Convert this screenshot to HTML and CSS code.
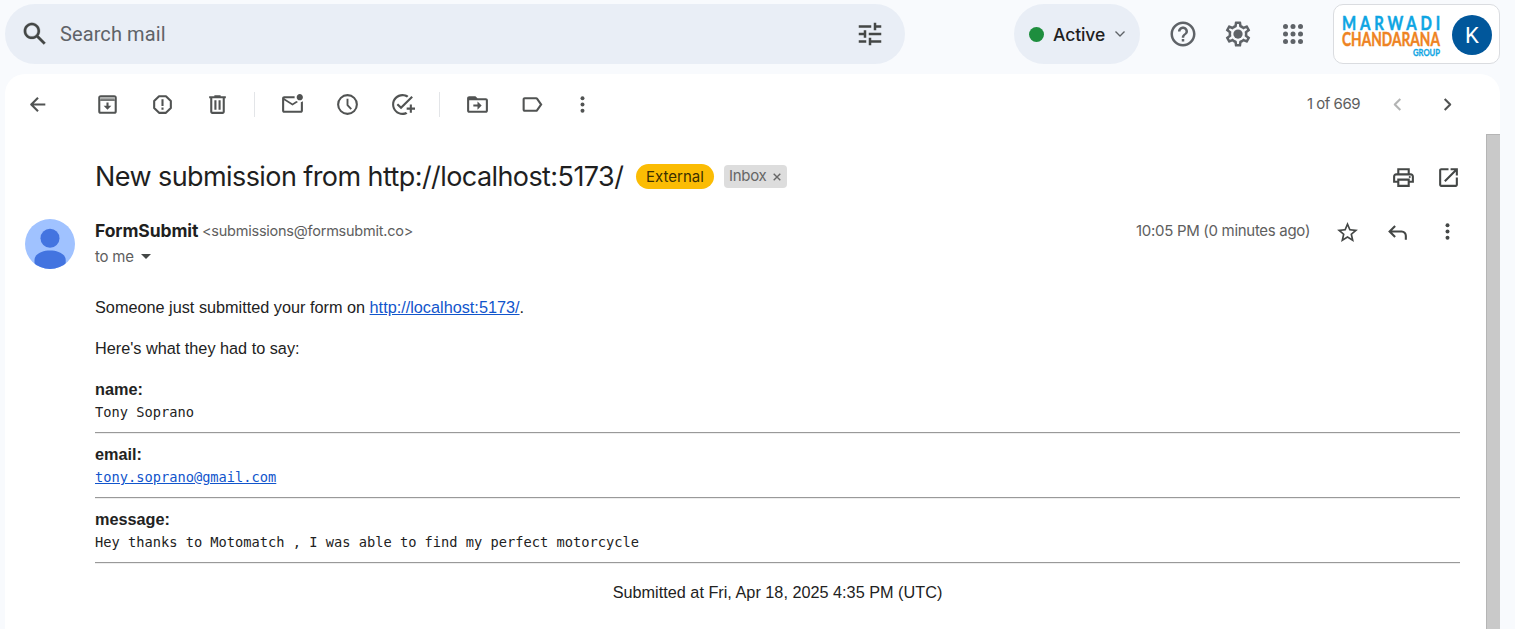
FILE: index.html
```html
<!DOCTYPE html>
<html lang="en">
<head>
<meta charset="utf-8">
<title>New submission from http://localhost:5173/</title>
<link rel="stylesheet" href="styles.css">
</head>
<body>
<header class="header">
  <div class="search">
    <svg class="icon-lg" viewBox="0 0 24 24"><path stroke="#444746" stroke-width=".2" d="M20.490 19l-5.730-5.730C15.530 12.200 16 10.910 16 9.500 16 5.910 13.090 3 9.500 3S3 5.910 3 9.500 5.910 16 9.500 16c1.410 0 2.700-.47 3.770-1.240L19 20.490 20.490 19zM5 9.500C5 7.010 7.010 5 9.500 5S14 7.010 14 9.500 11.990 14 9.500 14 5 11.990 5 9.500z"/></svg>
    <span class="search-text">Search mail</span>
    <svg class="icon-lg" viewBox="0 0 24 24"><path d="M3 17v2h6v-2H3zM3 5v2h10V5H3zm10 16v-2h8v-2h-8v-2h-2v6h2zM7 9v2H3v2h4v2h2V9H7zm14 4v-2H11v2h10zm-6-4h2V7h4V5h-4V3h-2v6z"/></svg>
  </div>
  <div class="status"><span class="status-dot"></span><span class="status-text">Active</span>
    <svg class="status-caret" viewBox="0 0 12 12"><path class="line" d="M1.500 3.500L6 8l4.500-4.500"/></svg>
  </div>
  <nav class="header-icons">
    <svg class="icon-lg" viewBox="0 0 24 24"><path d="M11 18h2v-2h-2v2zm1-16C6.480 2 2 6.480 2 12s4.480 10 10 10 10-4.480 10-10S17.520 2 12 2zm0 18c-4.410 0-8-3.590-8-8s3.590-8 8-8 8 3.590 8 8-3.590 8-8 8zm0-14c-2.210 0-4 1.790-4 4h2c0-1.100.9-2 2-2s2 .9 2 2c0 2-3 1.750-3 5h2c0-2.250 3-2.500 3-5 0-2.210-1.790-4-4-4z"/></svg>
    <svg class="icon-lg" viewBox="0 0 24 24"><path d="M19.430 12.980c.04-.32.07-.64.07-.98 0-.34-.03-.66-.07-.98l2.110-1.650c.19-.15.24-.42.12-.64l-2-3.460c-.09-.16-.26-.25-.44-.25-.06 0-.12.01-.17.03l-2.490 1c-.52-.4-1.080-.73-1.690-.98l-.38-2.650C14.460 2.180 14.250 2 14 2h-4c-.25 0-.46.18-.49.42l-.38 2.650c-.61.25-1.170.59-1.690.98l-2.490-1c-.06-.02-.12-.03-.18-.03-.17 0-.34.09-.43.25l-2 3.460c-.13.22-.07.49.12.64l2.110 1.650c-.04.32-.07.65-.07.98 0 .33.03.66.07.98l-2.110 1.650c-.19.15-.24.42-.12.64l2 3.460c.09.16.26.25.44.25.06 0 .12-.01.17-.03l2.490-1c.52.4 1.080.73 1.690.98l.38 2.650c.03.24.24.42.49.42h4c.25 0 .46-.18.49-.42l.38-2.650c.61-.25 1.170-.59 1.690-.98l2.490 1c.06.02.12.03.18.03.17 0 .34-.09.43-.25l2-3.460c.12-.22.07-.49-.12-.64l-2.110-1.650zm-1.980-1.710c.04.31.05.52.05.73 0 .21-.02.43-.05.73l-.14 1.130.89.7 1.080.84-.7 1.210-1.270-.51-1.040-.42-.9.68c-.43.32-.84.56-1.250.73l-1.060.43-.16 1.130-.2 1.350h-1.400l-.19-1.350-.16-1.130-1.060-.43c-.43-.18-.83-.41-1.230-.71l-.91-.7-1.060.43-1.270.51-.7-1.210 1.080-.84.89-.7-.14-1.130c-.03-.31-.05-.54-.05-.74s.02-.43.05-.73l.14-1.130-.89-.7-1.080-.84.7-1.210 1.270.51 1.040.42.9-.68c.43-.32.84-.56 1.250-.73l1.060-.43.16-1.130.2-1.350h1.390l.19 1.350.16 1.130 1.060.43c.43.18.83.41 1.230.71l.91.7 1.060-.43 1.270-.51.7 1.210-1.070.85-.89.7.14 1.130z"/><circle cx="12" cy="12" r="3.700"/></svg>
    <svg class="icon-lg" viewBox="0 0 24 24"><circle cx="6" cy="6" r="2"/><circle cx="12" cy="6" r="2"/><circle cx="18" cy="6" r="2"/><circle cx="6" cy="12" r="2"/><circle cx="12" cy="12" r="2"/><circle cx="18" cy="12" r="2"/><circle cx="6" cy="18" r="2"/><circle cx="12" cy="18" r="2"/><circle cx="18" cy="18" r="2"/></svg>
  </nav>
  <div class="account">
    <svg class="brand" viewBox="0 0 98 42">
      <text class="brand-blue brand-wide" x="0" y="15.500" font-size="19.500" textLength="102" lengthAdjust="spacingAndGlyphs">MARWADI</text>
      <text class="brand-orange" x="0" y="32" font-size="18" textLength="98" lengthAdjust="spacingAndGlyphs">CHANDARANA</text>
      <text class="brand-blue" x="71" y="41.500" font-size="10" textLength="27" lengthAdjust="spacingAndGlyphs">GROUP</text>
    </svg>
    <span class="account-avatar">K</span>
  </div>
</header>
<main class="panel">
  <div class="toolbar">
    <svg class="icon back" viewBox="0 0 24 24"><path class="line" d="M19.500 12H6.500M12.500 5.500L6 12l6.500 6.500"/></svg>
    <div class="tools">
      <svg class="icon" viewBox="0 0 24 24"><rect class="line" x="4.100" y="4.100" width="15.800" height="15.800" rx="1.500"/><path class="shade" d="M5 5h14v3H5z"/><path d="M5 7.200h14v1.300H5zM11 10h2v3.300h2.700L12 17l-3.700-3.700H11z"/></svg>
      <svg class="icon" viewBox="0 0 24 24"><path class="line" d="M8.700 4h6.600L20 8.700v6.600L15.300 20H8.700L4 15.300V8.700z"/><path d="M11 7h2v6.500h-2zM11 15h2v2h-2z"/></svg>
      <svg class="icon" viewBox="0 0 24 24"><path d="M15 4V3H9v1H4v2h1v13c0 1.100.9 2 2 2h10c1.100 0 2-.9 2-2V6h1V4h-5zm2 15H7V6h10v13zM9 8h2v9H9zm4 0h2v9h-2z"/></svg>
    </div>
    <span class="divider"></span>
    <div class="tools">
      <svg class="icon" viewBox="0 0 24 24"><path d="M22 8.980V18c0 1.100-.9 2-2 2H4c-1.100 0-2-.9-2-2V6c0-1.100.9-2 2-2h10.100c-.06.32-.1.66-.1 1s.04.68.1 1H4l8 5 3.670-2.290c.47.43 1.020.76 1.630.98L12 13 4 8v10h16V9.900c.74-.15 1.420-.48 2-.92zM16 5c0 1.660 1.340 3 3 3s3-1.340 3-3-1.340-3-3-3-3 1.340-3 3z"/></svg>
      <svg class="icon" viewBox="0 0 24 24"><circle class="line" cx="12" cy="12" r="9"/><path class="line thin" d="M12 6.500v6l3.600 3.900"/></svg>
      <svg class="icon" viewBox="0 0 24 24"><path d="M22 5.180L10.590 16.600l-4.240-4.240 1.410-1.410 2.830 2.830 10-10L22 5.180zM12 20c-4.410 0-8-3.590-8-8s3.590-8 8-8c1.570 0 3.040.46 4.280 1.250l1.450-1.450C16.100 2.670 14.130 2 12 2 6.480 2 2 6.480 2 12s4.480 10 10 10c1.730 0 3.360-.44 4.780-1.220l-1.500-1.500c-1 .46-2.110.72-3.280.72zm7-5h-3v2h3v3h2v-3h3v-2h-3v-3h-2v3z"/></svg>
    </div>
    <span class="divider"></span>
    <div class="tools">
      <svg class="icon" viewBox="0 0 24 24"><path d="M20 6h-8l-2-2H4c-1.100 0-2 .9-2 2v12c0 1.100.9 2 2 2h16c1.100 0 2-.9 2-2V8c0-1.100-.9-2-2-2zm0 12H4V8h16v10zM12 17l4-4-4-4v3H8v2h4z"/></svg>
      <svg class="icon" viewBox="0 0 24 24"><path d="M17.130 5.840C16.770 5.330 16.170 5 15.500 5L4.500 5.010C3.400 5.010 2.500 5.900 2.500 7v10c0 1.100.9 1.990 2 1.990L15.500 19c.67 0 1.270-.33 1.630-.84L21.500 12l-4.370-6.160zM15.500 17h-11V7h11l3.550 5-3.550 5z"/></svg>
      <svg class="icon more" viewBox="0 0 24 24"><circle cx="12" cy="6" r="1.900"/><circle cx="12" cy="12" r="1.900"/><circle cx="12" cy="18" r="1.900"/></svg>
    </div>
    <span class="counter">1 of 669</span>
    <svg class="icon faded" viewBox="0 0 24 24"><path class="line" d="M14.700 6.700L9.400 12l5.300 5.300"/></svg>
    <svg class="icon next" viewBox="0 0 24 24"><path class="line" d="M9.300 6.700l5.300 5.300-5.300 5.300"/></svg>
  </div>
  <div class="scroller">
    <article class="mail">
      <div class="subject-row">
        <h1 class="subject">New submission from http://localhost:5173/</h1>
        <span class="tag-external">External</span>
        <span class="tag-inbox"><span class="tag-label">Inbox</span><svg class="tag-close" viewBox="0 0 8 8"><path d="M.7.700l6.600 6.600M7.300.7L.7 7.300"/></svg></span>
        <svg class="icon print" viewBox="0 0 24 24"><path d="M19 8h-1V3H6v5H5c-1.660 0-3 1.340-3 3v6h4v4h12v-4h4v-6c0-1.660-1.340-3-3-3zM8 5h8v3H8V5zm8 14H8v-4h8v4zm2-4v-2H6v2H4v-4c0-.55.45-1 1-1h14c.55 0 1 .45 1 1v4h-2z"/><circle cx="18" cy="11.500" r="1"/></svg>
        <svg class="icon popout" viewBox="0 0 24 24"><path d="M19 19H5V5h7V3H5c-1.110 0-2 .9-2 2v14c0 1.100.89 2 2 2h14c1.100 0 2-.9 2-2v-7h-2v7zM14 3v2h3.590l-9.830 9.830 1.410 1.410L19 6.410V10h2V3h-7z"/></svg>
      </div>
      <div class="sender-row">
        <svg class="avatar" viewBox="0 0 50 50"><defs><clipPath id="round"><circle cx="25" cy="25" r="25"/></clipPath></defs><g clip-path="url(#round)"><path fill="#a0c2ff" d="M0 0h50v50H0z"/><circle cx="25" cy="19.300" r="9.500" fill="#4374e0"/><path fill="#4374e0" d="M9.500 50V41c0-6 7.500-9.500 15.500-9.500S40.700 35 40.700 41v9z"/></g></svg>
        <div class="sender">
          <div class="from"><b class="from-name">FormSubmit</b><span class="from-mail">&lt;submissions@formsubmit.co&gt;</span></div>
          <div class="to"><span class="to-me">to me</span><svg class="to-caret" viewBox="0 0 10 5"><path d="M0 0h10L5 5z"/></svg></div>
        </div>
        <div class="meta">
          <span class="time">10:05 PM (0 minutes ago)</span>
          <svg class="icon star" viewBox="0 0 24 24"><path d="M22 9.240l-7.190-.62L12 2 9.190 8.630 2 9.240l5.460 4.730L5.820 21 12 17.270 18.180 21l-1.630-7.030L22 9.240zM12 15.400l-3.760 2.270 1-4.280-3.320-2.880 4.380-.38L12 6.100l1.710 4.040 4.380.38-3.320 2.880 1 4.280L12 15.400z"/></svg>
          <svg class="icon" viewBox="0 -960 960 960"><path d="M760-200v-160q0-50-35-85t-85-35H273l144 144-57 56-240-240 240-240 57 56-144 144h367q83 0 141.500 58.500T840-360v160h-80Z"/></svg>
          <svg class="icon mail-more" viewBox="0 0 24 24"><circle cx="12" cy="6" r="1.900"/><circle cx="12" cy="12" r="1.900"/><circle cx="12" cy="18" r="1.900"/></svg>
        </div>
      </div>
      <div class="body">
        <p class="para">Someone just submitted your form on <a class="link" href="#">http://localhost:5173/</a>.</p>
        <p class="para">Here's what they had to say:</p>
        <section class="field"><b class="field-name">name:</b><pre class="field-value">Tony Soprano</pre></section>
        <section class="field"><b class="field-name">email:</b><pre class="field-value"><a class="link" href="#">tony.soprano@gmail.com</a></pre></section>
        <section class="field"><b class="field-name">message:</b><pre class="field-value">Hey thanks to Motomatch , I was able to find my perfect motorcycle</pre></section>
        <p class="submitted">Submitted at Fri, Apr 18, 2025 4:35 PM (UTC)</p>
      </div>
    </article>
    <div class="scrollbar"></div>
  </div>
</main>
</body>
</html>
```
FILE: styles.css
```css
* { box-sizing: border-box; }
body {
  margin: 0;
  height: 629px;
  overflow: hidden;
  display: flex;
  flex-direction: column;
  background: #f8fafd;
  color: #222;
  font-family: Inter, Roboto, sans-serif;
}
svg { display: block; flex: none; fill: #444746; }
.line { fill: none; stroke: #444746; stroke-width: 2; stroke-linejoin: round; }
.thin { stroke-width: 1.8; }
.shade { fill: #a3a5a4; }
.icon { width: 25px; height: 25px; }
.toolbar .icon { opacity: .93; }
.icon-lg { width: 30px; height: 30px; }

.header { display: flex; align-items: flex-start; height: 74px; padding: 4px 15px 0 5px; flex: none; }
.search {
  width: 900px; height: 60px; padding: 0 20px 0 15px;
  display: flex; align-items: center;
  border-radius: 30px; background: #e9eef6;
}
.search-text { flex: 1; margin-left: 10px; font: 20px/30px Roboto, sans-serif; letter-spacing: .1px; color: #5f6368; }
.status {
  width: 126px; height: 60px; margin-left: 109px; padding-left: 15px;
  display: flex; align-items: center;
  border-radius: 30px; background: #e9eef6;
}
.status-dot { width: 15px; height: 15px; border-radius: 50%; background: #1e8e3e; }
.status-text { width: 52px; margin-left: 9px; font-size: 17.500px; font-weight: 500; letter-spacing: -.1px; color: #1f1f1f; white-space: nowrap; }
.status-caret { width: 12px; height: 12px; margin-left: 9px; }
.status-caret .line { stroke-width: 1.400; stroke: #5f6368; }
.header-icons { display: flex; gap: 25px; margin: 15px 0 0 28px; }
.header-icons svg { fill: #5f6368; }
.account {
  width: 167px; height: 60px; margin-left: 25px; padding: 1px 7px 0 8px;
  display: flex; align-items: center; justify-content: space-between;
  border: 1px solid #dadce0; border-radius: 10px; background: #fff;
}
.brand { width: 98px; height: 42px; overflow: visible; font-family: Lato, sans-serif; font-weight: 700; }
.brand-blue { fill: #0ea5e3; stroke: #0ea5e3; stroke-width: .3; }
.brand-orange { fill: #ee8322; stroke: #ee8322; stroke-width: .4; }
.brand-wide { letter-spacing: 5px; stroke-width: .5; }
.account-avatar {
  width: 40px; height: 40px; border-radius: 50%; background: #01579b; color: #fff;
  font: 22px/41px Roboto, sans-serif; text-align: center;
}

.panel { flex: 1; width: 1495px; margin-left: 5px; display: flex; flex-direction: column; background: #fff; border-radius: 20px 20px 0 0; }
.toolbar { height: 60px; padding: 0 40px 0 20px; display: flex; align-items: center; flex: none; }
.back { margin-right: 45px; }
.tools { display: flex; gap: 30px; }
.more { margin-left: -5px; }
.divider { width: 1px; height: 25px; margin: 0 25px 0 24px; background: #e3e5e8; }
.counter { margin-left: auto; width: 53px; margin-right: 25px; font-size: 15px; line-height: 18px; letter-spacing: -.5px; color: #5e5e5e; white-space: nowrap; }
.toolbar .faded { opacity: .4; }
.next { margin-left: 25px; }

.scroller { flex: 1; display: flex; min-height: 0; }
.scrollbar { width: 14px; background: #c9c9c9; border-top: 1px solid #b5b5b5; border-left: 1px solid #b5b5b5; }
.mail { flex: 1; padding: 0 26px 0 20px; }
.subject-row { height: 85px; padding-left: 70px; display: flex; align-items: center; }
.subject { width: 528px; margin: 0 13px 0 0; font-size: 27px; line-height: 35px; font-weight: 400; letter-spacing: -.58px; color: #1f1f1f; white-space: nowrap; }
.tag-external { width: 78px; height: 25px; border-radius: 13px; background: #fbbc04; color: #3c2f00; font-size: 15px; line-height: 25px; text-align: center; }
.tag-inbox { width: 63px; height: 23px; margin-left: 10px; padding: 0 6px 0 5px; border-radius: 4px; background: #ddd; color: #666; font-size: 15px; letter-spacing: -.3px; line-height: 21px; display: flex; align-items: center; justify-content: space-between; }
.tag-label { padding-bottom: 2px; }
.tag-close { width: 8px; height: 8px; }
.tag-close path { stroke: #666; stroke-width: 1.400; }
.print { margin: 2px 20px 0 auto; }
.popout { margin: 2px -1px 0 0; }
.sender-row { display: flex; height: 76px; }
.avatar { width: 50px; height: 50px; margin-right: 20px; }
.sender { flex: 1; }
.from { display: flex; align-items: center; height: 25px; line-height: 23px; padding-bottom: 2px; }
.from-name { width: 107px; font-size: 17.500px; letter-spacing: -.1px; color: #1f1f1f; }
.from-mail { font-size: 14.500px; letter-spacing: -.24px; color: #5e5e5e; }
.to { display: flex; align-items: center; height: 25px; }
.to-me { width: 46px; font-size: 15px; letter-spacing: -.2px; color: #5e5e5e; }
.to-caret { width: 10px; height: 5px; }
.meta { display: flex; align-items: center; gap: 25px; height: 26px; }
.time { width: 174px; margin-top: -3px; font-size: 15px; letter-spacing: -.3px; color: #5e5e5e; white-space: nowrap; }
.mail-more { margin-top: -2px; }
.body { padding-left: 70px; font: 16.250px/24px "Liberation Sans", Arial, sans-serif; }
.para { margin: 0 0 17px; height: 24px; }
.link { color: #1155cc; text-decoration: underline; }
.field { height: 56px; border-bottom: 1px solid #999; margin-bottom: 9px; box-shadow: 0 1px #eee; }
.field-name { display: block; height: 25px; }
.field-value { margin: 0; font: 13.700px/21px "DejaVu Sans Mono", monospace; }
.submitted { margin: 17px 0 0; text-align: center; }
```
